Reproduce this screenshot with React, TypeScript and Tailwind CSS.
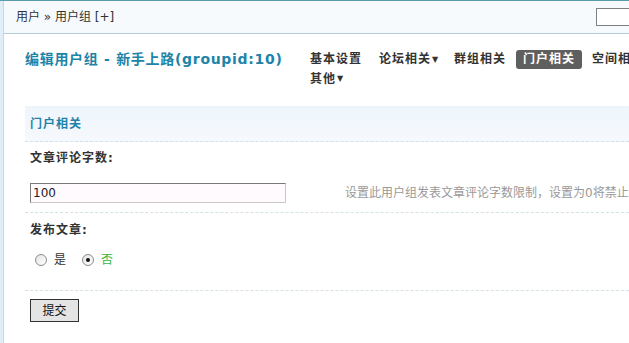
import React from 'react';

const tabs = [
  { label: '基本设置', w: 'w-[69px]' },
  { label: '论坛相关', arrow: true, w: 'w-[75px]' },
  { label: '群组相关', w: 'w-[62px]' },
  { label: '门户相关', active: true, w: 'w-[66px]' },
  { label: '空间相关', w: 'w-[80px]' },
];

function Radio({ checked }: { checked?: boolean }) {
  return (
    <span className="w-[12px] h-[12px] rounded-full border border-[#8c8c8c] bg-gradient-to-br from-[#e4e4e4] to-white flex items-center justify-center shrink-0">
      {checked && <span className="w-[4px] h-[4px] rounded-full bg-[#111]" />}
    </span>
  );
}

export default function App() {
  return (
    <div
      className="w-[629px] h-[343px] overflow-hidden bg-white border-t border-[#5a9caa] flex text-[12px] text-[#333]"
      style={{ fontFamily: "'DejaVu Sans', 'Noto Sans CJK SC', sans-serif" }}
    >
      {/* left strip */}
      <div className="w-[4px] shrink-0 bg-[#e0eef8] border-r border-[#c3d9e7]" />

      <div className="flex-1 min-w-0 flex flex-col">
        {/* breadcrumb bar */}
        <div className="h-[33px] shrink-0 bg-[#f6fafd] border-b border-[#b3ccd7] flex items-center pl-3">
          <span className="whitespace-nowrap">用户 » 用户组 [+]</span>
          <input className="ml-auto mr-[-27px] w-[60px] h-[18px] border border-[#7f7f7f] bg-white shrink-0" />
        </div>

        <div className="pl-[21px]">
          {/* title + tabs */}
          <div className="flex mt-[16px] whitespace-nowrap">
            <div className="w-[285px] shrink-0 text-[14px] font-bold text-[#1d84a8] leading-[19px] tracking-[0.7px]">
              编辑用户组 - 新手上路(groupid:10)
            </div>
            <div className="flex flex-col font-bold tracking-[1px]">
              <div className="flex h-[19px] items-center">
                {tabs.map(t => (
                  <span
                    key={t.label}
                    className={`${t.w} shrink-0 h-[19px] leading-[19px] flex items-center ${t.active ? 'bg-[#5f5f5f] text-white rounded-[3px] justify-center mr-[10px]' : 'text-[#333]'}`}
                  >
                    {t.label}
                    {t.arrow && <span className="text-[8px] ml-[1px]">▼</span>}
                  </span>
                ))}
              </div>
              <div className="flex h-[19px] items-center">
                其他<span className="text-[8px] ml-[1px]">▼</span>
              </div>
            </div>
          </div>

          {/* section header */}
          <div className="mt-[18px] h-[36px] bg-gradient-to-b from-[#edf5fc] to-[#f6f9fd] border-b border-dashed border-[#d5e1e8] flex items-center pl-[5px] font-bold text-[#1d84a8] tracking-[1px]">
            门户相关
          </div>

          {/* 文章评论字数 */}
          <div className="border-b border-dashed border-[#d5e1e8] pb-[9px]">
            <div className="mt-[6px] pl-[5px] h-[20px] leading-[20px] font-bold tracking-[1px]">文章评论字数:</div>
            <div className="mt-[15px] pl-[5px] flex items-center whitespace-nowrap">
              <input
                defaultValue="100"
                className="w-[256px] h-[20px] shrink-0 border border-t-[#7a7a7a] border-l-[#7a7a7a] border-r-[#c8c8c8] border-b-[#c8c8c8] bg-[#fffafd] px-[2px] text-[12px] text-[#222] outline-none"
              />
              <span className="ml-[59px] text-[#999]">设置此用户组发表文章评论字数限制，设置为0将禁止评论</span>
            </div>
          </div>

          {/* 发布文章 */}
          <div className="border-b border-dashed border-[#d5e1e8] pb-[20px]">
            <div className="mt-[7px] pl-[5px] h-[20px] leading-[20px] font-bold tracking-[1px]">发布文章:</div>
            <div className="mt-[10px] h-[20px] pl-[10px] flex items-center">
              <Radio />
              <span className="ml-[7px]">是</span>
              <span className="ml-[16px]"><Radio checked /></span>
              <span className="ml-[7px] text-[#3cb43c]">否</span>
            </div>
          </div>

          {/* submit */}
          <div className="mt-[8px] pl-[5px]">
            <button className="w-[49px] h-[23px] border border-[#333] bg-[#e4e4e4] text-[12px] text-[#111] leading-none">
              提交
            </button>
          </div>
        </div>
      </div>
    </div>
  );
}
